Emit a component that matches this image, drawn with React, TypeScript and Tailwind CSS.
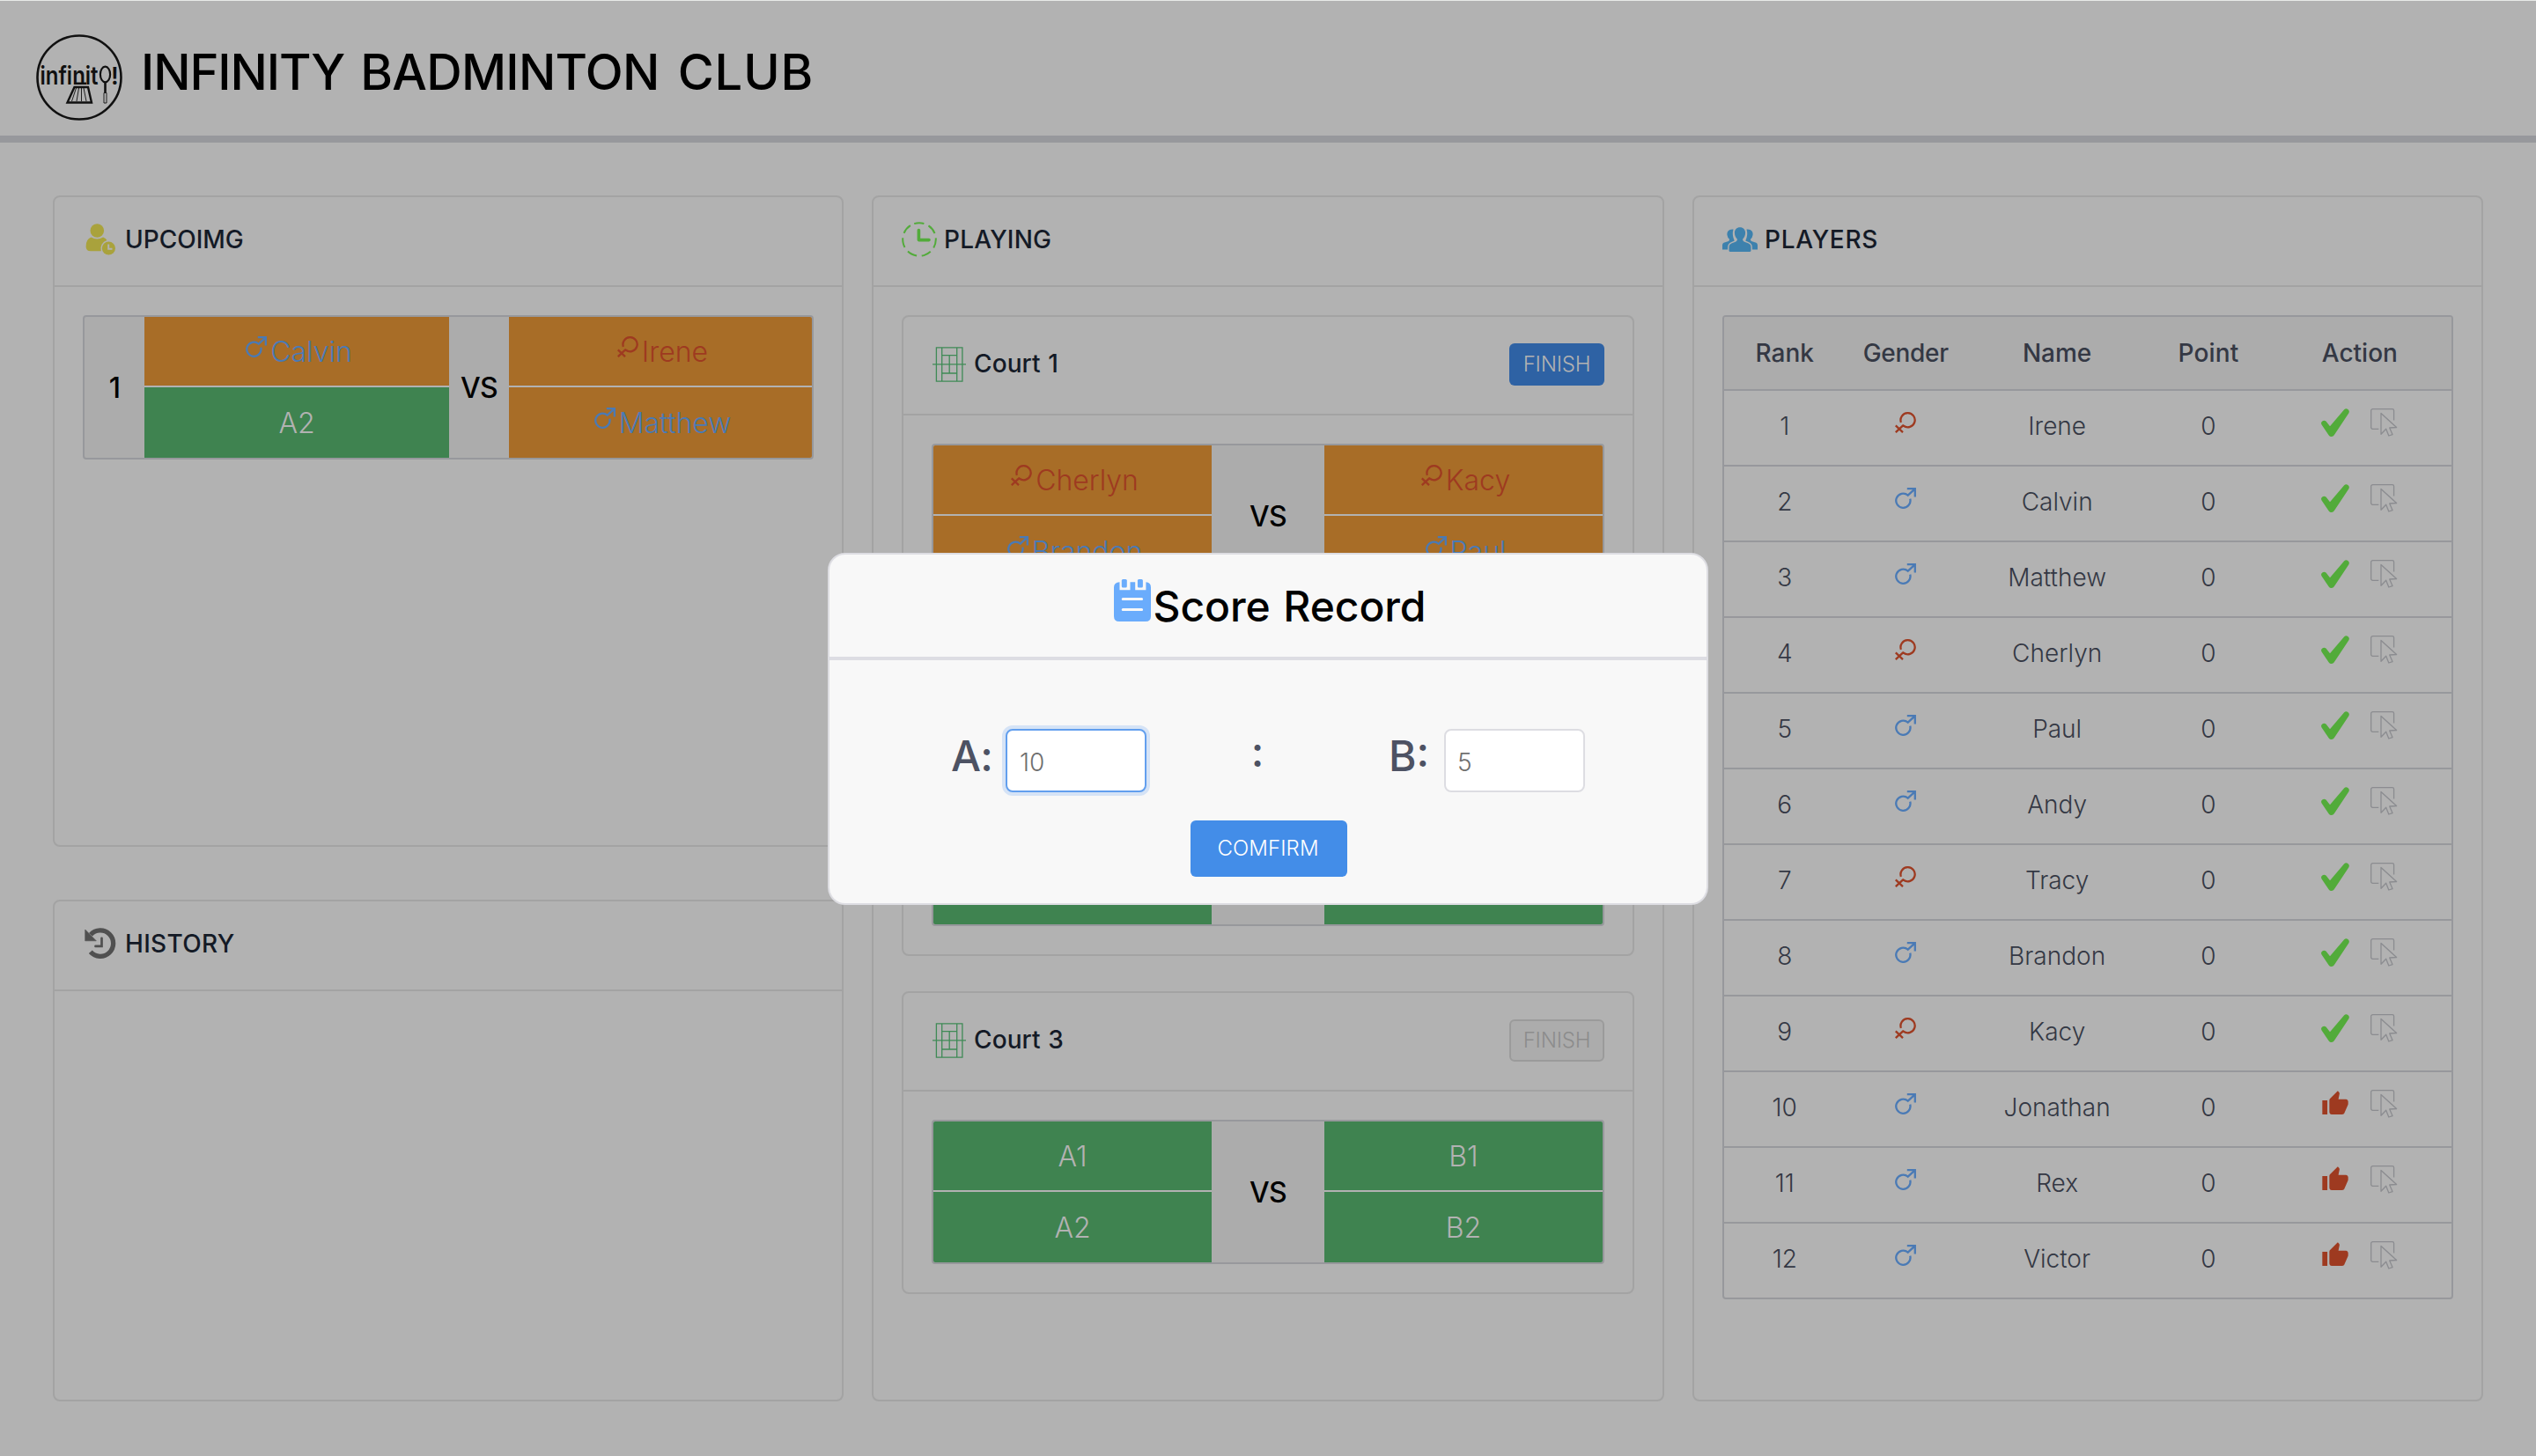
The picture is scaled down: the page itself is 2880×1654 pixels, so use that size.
import type { ReactNode } from "react";

type Gender = "male" | "female";
type Slot = { name: string; gender?: Gender };

function GenderIcon({ gender }: { gender: Gender }) {
  return (
    <svg
      viewBox="0 0 24 24"
      fill="none"
      strokeWidth="2.3"
      className={gender === "male" ? "size-6 shrink-0 stroke-[#4a7ab5]" : "size-6 shrink-0 stroke-[#9e3a20]"}
    >
      {gender === "male" ? (
        <path d="M17.2 12.6A8.1 8.1 0 1 1 14.7 8.6L22.4 1.6M13.8 1.2H22.8V10.4" />
      ) : (
        <path d="M6.9 11.9A8.1 8.1 0 1 1 9.8 15.8L8.6 14.9M9.4 15.1L.8 23.2M.8 15.4L9 23.2" />
      )}
    </svg>
  );
}

function PersonClockIcon() {
  return (
    <svg viewBox="0 0 40 40" className="size-10 fill-[#a9a23c]">
      <circle cx="16.3" cy="10" r="7.8" />
      <path d="M9.5 17.6q6.8 4 13.6 0q3.4 1.500 4.300 3.400a9.800 9.800 0 0 0-6.600 12.300H9q-5.400 0-5.400-5.400Q3.600 19.800 9.500 17.600Z" />
      <circle cx="29.4" cy="30" r="7.6" />
      <path d="M29.200 25.400v5.400h4.300" fill="none" strokeWidth="2" className="stroke-[#b2b2b2]" />
    </svg>
  );
}

function HistoryIcon() {
  return (
    <svg viewBox="0 0 40 40" fill="none" className="size-10 stroke-[#505050]">
      <path d="M8.800 29.200A14.700 14.700 0 1 0 9 9.800" strokeWidth="5.300" />
      <path d="M2.700 4L2.700 16.800H15.300Z" className="fill-[#505050]" strokeWidth="0.600" />
      <path d="M21.500 13.800V22.900H14.500" strokeWidth="2.700" strokeLinecap="round" />
    </svg>
  );
}

function ClockIcon() {
  return (
    <svg viewBox="0 0 40 40" fill="none" className="size-10 stroke-[#52ab3a]">
      <circle cx="20" cy="20" r="18.800" strokeWidth="2" strokeDasharray="11.300 5.575" transform="rotate(-108 20 20)" />
      <path d="M19.400 9.600V20.600H31" strokeWidth="3.600" strokeLinecap="round" strokeLinejoin="round" />
    </svg>
  );
}

function GroupIcon() {
  return (
    <svg viewBox="0 0 40 40" className="size-10 fill-[#3d81ad]">
      <path d="M12.500 8.600q-2-.400-4 .400q-3.500 1.800-3.100 5.800q.500 3.400 2.600 4.900q.200 1.600-1 2.200L1.600 23.800Q0 24.600 0 26.400V31.400H6.100V29.200q0-4.300 3.600-6l4-1.800Q10.600 15 12.500 8.600Z" />
      <path d="M27.500 8.600q2-.400 4 .400q3.500 1.800 3.100 5.800q-.500 3.400-2.600 4.900q-.200 1.600 1 2.200l5.400 1.900Q40 24.600 40 26.400V31.400H33.900V29.200q0-4.300-3.600-6l-4-1.800Q29.400 15 27.500 8.600Z" />
      <path d="M20 6.200c3.700 0 6.100 2.700 6.100 6.400c0 3.400-1.500 5.500-2.900 6.900c-.300 1.800.700 2.700 2 3.200l4.500 1.700q2.800 1.200 2.800 4v4q0 1.600-1.600 1.600H9.100q-1.600 0-1.600-1.600v-4q0-2.800 2.800-4l4.500-1.700c1.300-.500 2.300-1.400 2-3.200c-1.400-1.400-2.900-3.500-2.900-6.900c0-3.700 2.400-6.400 6.100-6.400Z" />
    </svg>
  );
}

function CourtIcon() {
  return (
    <svg viewBox="0 0 40 40" fill="none" strokeWidth="1.300" className="size-10 stroke-[#3f8a56]">
      <path d="M5.400 .9H34.900V39.100H5.400ZM11.700 .9V39.100M28.700 .9V39.100M11.700 9.700H28.700M11.700 30H28.700M20.200 9.700V30M1 19.900H39" />
    </svg>
  );
}

function CheckIcon() {
  return (
    <svg viewBox="0 0 32 32" className="size-8 fill-[#52ab3a]">
      <path d="M.6 18.600A3.200 3.200 0 0 1 5.500 14.600L10 20.300L26.200 1.300A3.300 3.300 0 0 1 31.400 5.200L14.800 30.200A3.700 3.700 0 0 1 8.700 30.400Z" />
    </svg>
  );
}

function ThumbIcon() {
  return (
    <svg viewBox="0 0 24 24" className="size-8 fill-[#9e3a20]">
      <path d="M1 21h4.300V9H1v12zm22-11c0-1.100-.9-2-2-2h-6.310l.95-4.570.03-.32c0-.41-.17-.79-.44-1.060L14.170 1 7.590 7.590C7.220 7.950 7 8.450 7 9v10c0 1.100.9 2 2 2h9c.83 0 1.540-.5 1.840-1.220l3.020-7.050c.09-.23.14-.47.14-.73v-2z" />
    </svg>
  );
}

function PickIcon() {
  return (
    <svg viewBox="0 0 32 32" fill="none" strokeWidth="1.300" strokeLinejoin="round" className="size-8 stroke-[#8b8c90]">
      <path d="M9.300 23.300H2.500a1.800 1.800 0 0 1-1.800-1.800V2.500A1.800 1.800 0 0 1 2.500.7h22.300a1.800 1.800 0 0 1 1.800 1.800V13.600" />
      <path d="M12 5.400V29.300L17.700 23.300L20.800 31L25 29.600L21.700 22L29.600 21.500Z" />
    </svg>
  );
}

function NotebookIcon() {
  return (
    <svg viewBox="0 0 48 48" className="size-12 fill-[#6aacfc]">
      <path d="M9.500 3.200V12.200H21.500V3.200H27.200V12.200H39.400V3.200q5.600.6 5.600 6V42q0 6-6 6H9q-6 0-6-6V9.200q0-5.400 6.500-6Z" />
      <rect x="11.800" y="0" width="6" height="9.500" rx="1.500" />
      <rect x="29.900" y="0" width="6" height="9.500" rx="1.500" />
      <path d="M13.200 22.400H34.600M13.200 34.400H34.600" strokeWidth="3" strokeLinecap="round" className="stroke-[#f8f8f8]" />
    </svg>
  );
}

function Logo() {
  return (
    <svg viewBox="0 0 100 100" fill="none" className="h-[100px] w-[100px] stroke-[#111111]">
      <circle cx="50" cy="50" r="47.500" strokeWidth="2.600" />
      <text
        x="5.500"
        y="58"
        textLength="66"
        lengthAdjust="spacingAndGlyphs"
        stroke="none"
        className="fill-[#111111] font-['Inter',sans-serif] text-[28px] font-semibold"
      >
        infinit
      </text>
      <text x="86" y="58" stroke="none" className="fill-[#111111] font-['Inter',sans-serif] text-[27px] font-semibold">
        !
      </text>
      <path d="M44.500 56.800H58" strokeWidth="2.500" />
      <path d="M44.500 61H60L64 78.500H36.500Z" strokeWidth="2.400" />
      <path d="M46.500 62L41.500 77M49.500 62L47 77M52.500 62V77M55 62L58 77" strokeWidth="0.900" />
      <ellipse cx="79.500" cy="46.500" rx="5.600" ry="8.800" strokeWidth="2.200" />
      <path d="M79.500 55.500V67" strokeWidth="2.600" />
      <path d="M78 67.500H81V79H78Z" strokeWidth="0.900" />
    </svg>
  );
}

function Panel({
  icon,
  title,
  className,
  titleClass,
  children,
}: {
  icon: ReactNode;
  title: string;
  className: string;
  titleClass: string;
  children?: ReactNode;
}) {
  return (
    <section className={`rounded-lg border-2 border-[#a3a3a3] ${className}`}>
      <header className="flex h-[102px] items-center gap-2 border-b-2 border-[#a3a3a3] px-8 pb-1">
        {icon}
        <h2 className={`text-[28px] leading-10 font-[480] text-[#141a26] ${titleClass}`}>{title}</h2>
      </header>
      <div className="p-8">{children}</div>
    </section>
  );
}

function SlotCell({ slot, className }: { slot: Slot; className: string }) {
  const tone = !slot.gender
    ? "bg-[#3f8350] text-[#b2b2b2]"
    : slot.gender === "male"
      ? "bg-[#a86d27] pl-[5px] text-[#4a7ab5]"
      : "bg-[#a86d27] pl-[5px] text-[#9e3a20]";
  return (
    <div className={`flex items-center justify-center text-[32px] leading-none font-light ${tone} ${className}`}>
      {slot.gender && (
        <span className="mr-1 mb-[10px]">
          <GenderIcon gender={slot.gender} />
        </span>
      )}
      <span className="pt-px">{slot.name}</span>
    </div>
  );
}

function Team({ slots }: { slots: [Slot, Slot] }) {
  return (
    <div className="flex flex-col gap-0.5 bg-[#b2b2b2]">
      <SlotCell slot={slots[0]} className="h-[78px]" />
      <SlotCell slot={slots[1]} className="h-20" />
    </div>
  );
}

function Versus({ children }: { children: ReactNode }) {
  return (
    <div className="flex items-center justify-center pt-0.5 text-[32px] leading-none font-[450] tracking-[-0.8px] text-black">
      {children}
    </div>
  );
}

const courts: { name: string; active: boolean; a: [Slot, Slot]; b: [Slot, Slot] }[] = [
  {
    name: "Court 1",
    active: true,
    a: [
      { name: "Cherlyn", gender: "female" },
      { name: "Brandon", gender: "male" },
    ],
    b: [
      { name: "Kacy", gender: "female" },
      { name: "Paul", gender: "male" },
    ],
  },
  { name: "Court 2", active: false, a: [{ name: "A1" }, { name: "A2" }], b: [{ name: "B1" }, { name: "B2" }] },
  { name: "Court 3", active: false, a: [{ name: "A1" }, { name: "A2" }], b: [{ name: "B1" }, { name: "B2" }] },
];

const players: { name: string; gender: Gender; ready: boolean }[] = [
  { name: "Irene", gender: "female", ready: true },
  { name: "Calvin", gender: "male", ready: true },
  { name: "Matthew", gender: "male", ready: true },
  { name: "Cherlyn", gender: "female", ready: true },
  { name: "Paul", gender: "male", ready: true },
  { name: "Andy", gender: "male", ready: true },
  { name: "Tracy", gender: "female", ready: true },
  { name: "Brandon", gender: "male", ready: true },
  { name: "Kacy", gender: "female", ready: true },
  { name: "Jonathan", gender: "male", ready: false },
  { name: "Rex", gender: "male", ready: false },
  { name: "Victor", gender: "male", ready: false },
];

function Court({ court }: { court: (typeof courts)[number] }) {
  return (
    <article className="rounded-lg border-2 border-[#a3a3a3]">
      <header className="flex h-[112px] items-center border-b-2 border-[#a3a3a3] px-8 pb-0.5">
        <CourtIcon />
        <h3 className="ml-2 pb-[3px] text-[28px] leading-10 font-[480] tracking-[0.1px] text-[#141a26] [word-spacing:1px]">
          {court.name}
        </h3>
        <button
          className={
            court.active
              ? "ml-auto h-12 w-[108px] rounded-md bg-[#2e62a4] text-2xl leading-none font-light tracking-[-0.2px] text-[#b2b2b2]"
              : "ml-auto h-12 w-[108px] rounded-md border-2 border-[#9b9b9b] bg-[#acacac] text-2xl leading-none font-light tracking-[-0.2px] text-[#8c8c8c]"
          }
        >
          FINISH
        </button>
      </header>
      <div className="p-8">
        <div className="grid grid-cols-[316px_128px_316px] overflow-hidden rounded border-2 border-[#97989c] bg-[#acacac]">
          <Team slots={court.a} />
          <Versus>VS</Versus>
          <Team slots={court.b} />
        </div>
      </div>
    </article>
  );
}

function PlayersTable() {
  return (
    <div className="overflow-hidden rounded border-2 border-[#97989c] text-center text-[28px] leading-8 text-[#343844]">
      <div className="grid h-[84px] grid-cols-[4fr_4fr_6fr_4fr_6fr] items-center border-b-2 border-[#97989c] bg-[#acacac] pr-px pb-px font-[480]">
        <span>Rank</span>
        <span className="tracking-[-0.3px]">Gender</span>
        <span>Name</span>
        <span className="tracking-[0.2px]">Point</span>
        <span>Action</span>
      </div>
      {players.map((p, i) => (
        <div
          key={p.name}
          className="grid h-[86px] grid-cols-[4fr_4fr_6fr_4fr_6fr] items-center border-b-2 border-[#97989c] pr-px font-light last:h-[84px] last:border-b-0"
        >
          <span className="pb-1">{i + 1}</span>
          <span className="flex justify-center pb-3">
            <GenderIcon gender={p.gender} />
          </span>
          <span className="pb-1">{p.name}</span>
          <span className="pb-1">0</span>
          <span className="flex justify-center gap-6 pb-3">
            {p.ready ? <CheckIcon /> : <ThumbIcon />}
            <PickIcon />
          </span>
        </div>
      ))}
    </div>
  );
}

function ScoreDialog() {
  return (
    <div
      role="dialog"
      className="absolute top-[628px] left-[940px] h-[400px] w-[1000px] rounded-[20px] border-2 border-[#dddde2] bg-[#f8f8f8]"
    >
      <header className="flex h-[120px] items-center justify-center border-b-4 border-[#dddde3] pl-px">
        <span className="mb-3">
          <NotebookIcon />
        </span>
        <h2 className="pt-0.5 text-[48px] leading-none font-[460] tracking-[-0.1px] text-black [word-spacing:2px]">
          Score Record
        </h2>
      </header>
      <div className="flex h-[150px] items-center pt-[78px] pl-[138px] text-[48px] leading-none font-[460] text-[#4d5263]">
        <span className="w-[62px] pb-[10px] tracking-[-0.9px]">A:</span>
        <span className="flex h-[72px] w-40 items-center rounded-lg border-2 border-[#629fee] bg-white pt-1 pl-[14px] text-[28px] font-light text-[#6f6f6f] ring-4 ring-[#d5e3f6]">
          10
        </span>
        <span className="w-[275px] pr-[23px] pb-[21px] text-center">:</span>
        <span className="w-[63px] pb-[10px]">B:</span>
        <span className="flex h-[72px] w-40 items-center rounded-lg border-2 border-[#dddde2] bg-white pt-1 pl-[13px] text-[28px] font-light text-[#6f6f6f]">
          5
        </span>
      </div>
      <button className="mt-8 ml-[410px] block h-16 w-[178px] rounded-md bg-[#438de8] pr-0.5 text-2xl leading-none font-light tracking-[0.1px] text-white">
        COMFIRM
      </button>
    </div>
  );
}

export default function App() {
  return (
    <div className="relative h-[1654px] w-[2880px] overflow-hidden bg-[#b2b2b2] font-['Inter','Liberation_Sans',sans-serif]">
      <header className="flex h-[162px] items-center border-t border-b-8 border-t-[#e8eae8] border-b-[#97989c] pl-10">
        <span className="mt-[21px]">
          <Logo />
        </span>
        <h1 className="mt-[9px] ml-5 flex gap-[18px] text-[56px] leading-none font-medium text-black">
          <span className="tracking-[-1.1px]">INFINITY</span>
          <span className="tracking-[-0.7px]">BADMINTON</span>
          <span className="ml-[3px] tracking-[0.9px]">CLUB</span>
        </h1>
      </header>

      <main className="grid h-[1430px] grid-cols-[898px_900px_898px] gap-8 px-[60px] pt-[60px]">
        <div className="flex flex-col gap-[60px]">
          <Panel icon={<PersonClockIcon />} title="UPCOIMG" className="h-[740px]" titleClass="">
            <div className="grid w-[830px] grid-cols-[68px_346px_68px_344px] overflow-hidden rounded border-2 border-[#97989c] bg-[#acacac]">
              <Versus>1</Versus>
              <Team slots={[{ name: "Calvin", gender: "male" }, { name: "A2" }]} />
              <Versus>VS</Versus>
              <Team
                slots={[
                  { name: "Irene", gender: "female" },
                  { name: "Matthew", gender: "male" },
                ]}
              />
            </div>
          </Panel>
          <Panel icon={<HistoryIcon />} title="HISTORY" className="h-[570px]" titleClass="tracking-[0.3px]" />
        </div>

        <Panel icon={<ClockIcon />} title="PLAYING" className="h-[1370px]" titleClass="tracking-[0.2px]">
          <div className="flex w-[832px] flex-col gap-10">
            {courts.map((c) => (
              <Court key={c.name} court={c} />
            ))}
          </div>
        </Panel>

        <Panel icon={<GroupIcon />} title="PLAYERS" className="h-[1370px]" titleClass="tracking-[0.7px]">
          <div className="w-[830px]">
            <PlayersTable />
          </div>
        </Panel>
      </main>

      <ScoreDialog />
    </div>
  );
}
